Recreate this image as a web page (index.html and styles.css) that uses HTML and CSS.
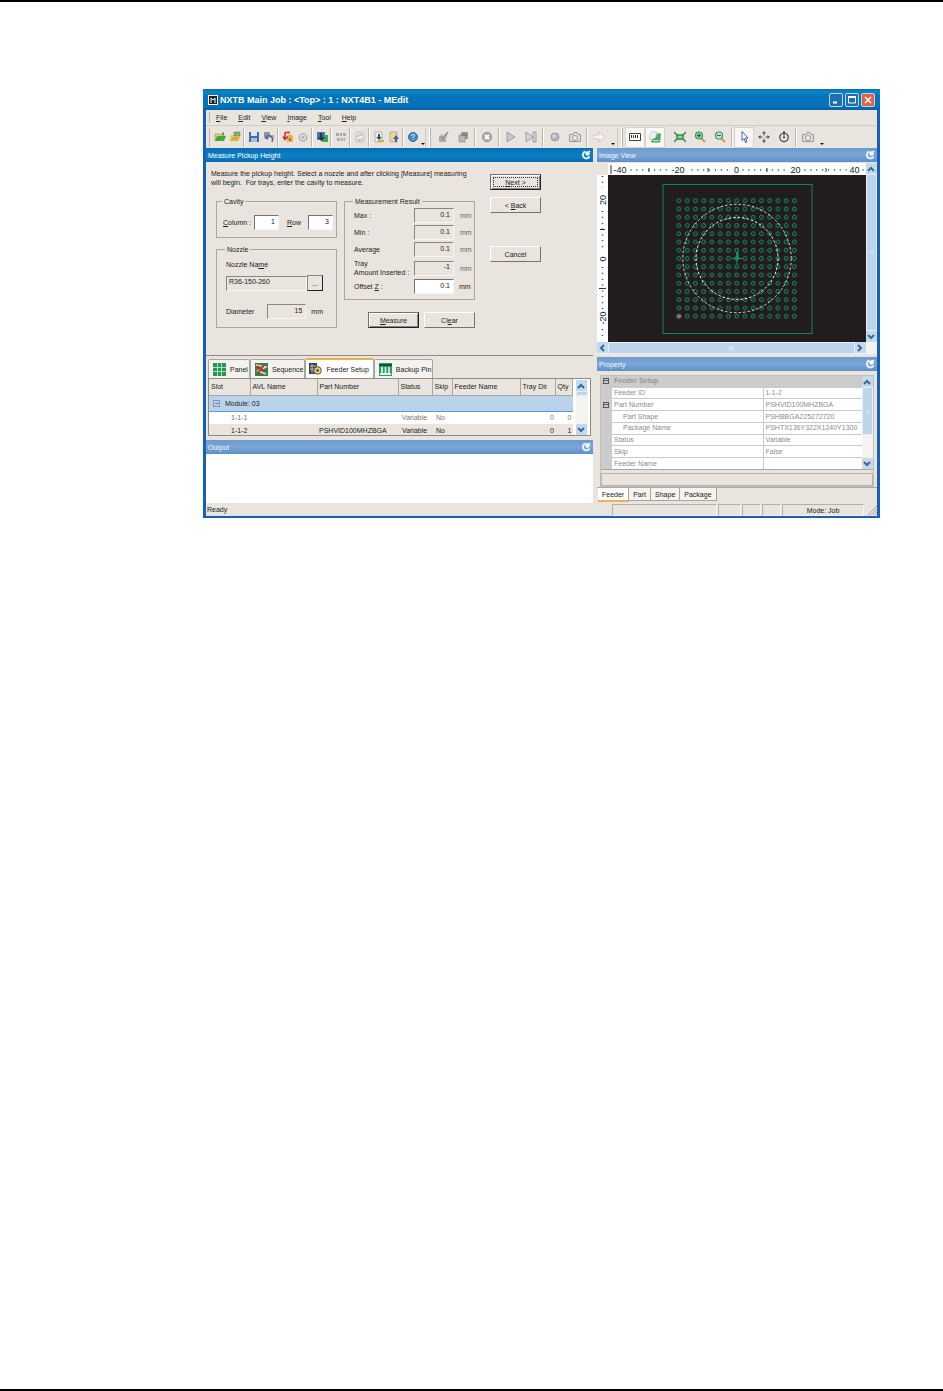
FILE: index.html
```html
<!DOCTYPE html>
<html lang="en">
<head>
<meta charset="utf-8">
<title>NXTB Main Job - MEdit</title>
<link rel="stylesheet" href="styles.css">
</head>
<body>
<main class="page">
<section class="window">
  <header class="titlebar">
    <svg class="app-icon" viewBox="0 0 10 10"><rect width="10" height="10" fill="#fff"/><rect x="1" y="1" width="8" height="8" fill="#222"/><path d="M3 8V3l2 2 2-2v5" fill="none" stroke="#fff"/></svg>
    <h1 class="title">NXTB Main Job : &lt;Top&gt; : 1 : NXT4B1 - MEdit</h1>
    <button class="winbtn" aria-label="Minimize"><svg viewBox="0 0 12 12"><path d="M3 8.500h4" stroke="#fff" stroke-width="2"/></svg></button>
    <button class="winbtn" aria-label="Maximize"><svg viewBox="0 0 12 12"><path d="M2.500 3v6h7V3z" fill="none" stroke="#fff"/><path d="M2 3h8" stroke="#fff" stroke-width="2"/></svg></button>
    <button class="winbtn close" aria-label="Close"><svg viewBox="0 0 12 12"><path d="M3 3l6 6M9 3l-6 6" stroke="#fff" stroke-width="1.500"/></svg></button>
  </header>
  <nav class="menu">
    <a href="#"><u>F</u>ile</a><a href="#"><u>E</u>dit</a><a href="#"><u>V</u>iew</a><a href="#"><u>I</u>mage</a><a href="#"><u>T</u>ool</a><a href="#"><u>H</u>elp</a>
  </nav>
  <div class="toolbar">
    <span class="grip first"></span>
    <button class="tool" aria-label="Open"><svg viewBox="0 0 12 12"><path d="M1 10V3h4l1 1h4v2" fill="#e8d36a" stroke="#8a8a3a" stroke-width=".6"/><path d="M1 10l2-5h9l-2 5z" fill="#49a63c"/><path d="M7 3l3-2v3" fill="#3c9a4a"/></svg></button>
    <button class="tool" aria-label="Open job"><svg viewBox="0 0 12 12"><path d="M1 10V4h4l1 1h4v2" fill="#e8d36a"/><path d="M1 10l2-4h8l-2 4z" fill="#d3b23c"/><path d="M5 1h6v4H5z" fill="#8fae6a" stroke="#666" stroke-width=".5"/></svg></button>
    <span class="sep"></span>
    <button class="tool" aria-label="Save"><svg viewBox="0 0 12 12"><path d="M1 1h10v10H1z" fill="#466bb3"/><path d="M3 1h6v4H3z" fill="#dbe6f6"/><path d="M3 7h6v4H3z" fill="#a9bddf"/></svg></button>
    <button class="tool" aria-label="Undo"><svg viewBox="0 0 12 12"><path d="M1 1h6v5H1z" fill="#8a93a6"/><path d="M5 4h6v3H5z" fill="#aaa"/><path d="M3 6c4-3 8 0 6 5" fill="none" stroke="#5c6c96" stroke-width="1.600"/><path d="M1 7l4-3v5z" fill="#5c6c96"/></svg></button>
    <span class="sep"></span>
    <button class="tool" aria-label="Revert"><svg viewBox="0 0 12 12"><path d="M5 5l3-2 3 2v6H5z" fill="#e5b64e"/><path d="M3 1.500h5" stroke="#c8322a" stroke-width="1.600"/><path d="M3 1.500v6M1 5.500l2 3 3-3" fill="none" stroke="#c8322a" stroke-width="1.500"/><path d="M7 7h2v3H7z" fill="#d8543a"/></svg></button>
    <button class="tool" aria-label="Stop"><svg viewBox="0 0 12 12"><circle cx="6" cy="6.500" r="3.700" fill="#e4e4e4" stroke="#aaa" stroke-width="1.300"/><path d="M4.500 5l3 3m0-3l-3 3" stroke="#999"/></svg></button>
    <span class="sep"></span>
    <button class="tool" aria-label="Transfer"><svg viewBox="0 0 12 12"><path d="M1 1h8v8H1z" fill="#4f76ad"/><path d="M8 4h4v7H6z" fill="#3ca64a"/><path d="M5 2v5" stroke="#1d3a55" stroke-width="2.500"/><path d="M2 6h7l-3.500 4.500z" fill="#1d3a55"/></svg></button>
    <span class="sep"></span>
    <button class="tool" aria-label="Optimize"><svg viewBox="0 0 12 12"><path d="M1 2h3v3H1zM5 2h2v3H5zM8 2h3v3H8zM2 7h8v3H2z" fill="#aaa"/><path d="M1 6h10M5 7v4M8 7v4" stroke="#ddd"/></svg></button>
    <span class="sep"></span>
    <button class="tool" aria-label="Refresh"><svg viewBox="0 0 12 12"><path d="M2 1h6l2 2v8H2z" fill="#eee" stroke="#aaa" stroke-width=".7"/><path d="M4 6a2 2 0 014-1M8 7a2 2 0 01-4 1" fill="none" stroke="#999"/></svg></button>
    <span class="sep"></span>
    <button class="tool" aria-label="Download"><svg viewBox="0 0 12 12"><path d="M2 1h7v10H2z" fill="#f7f2da" stroke="#999" stroke-width=".7"/><path d="M6 3v3" stroke="#274b9d" stroke-width="2"/><path d="M3 6h6L6 9z" fill="#274b9d"/><path d="M5 9h6v2H5z" fill="#d8a93c"/></svg></button>
    <button class="tool" aria-label="Upload"><svg viewBox="0 0 12 12"><path d="M2 1h7v10H2z" fill="#f2d688" stroke="#999" stroke-width=".7"/><path d="M8 7v4" stroke="#3e63ad" stroke-width="2"/><path d="M5 8h6L8 4z" fill="#3e63ad"/></svg></button>
    <span class="sep"></span>
    <button class="tool" aria-label="Help"><svg viewBox="0 0 12 12"><circle cx="6" cy="6" r="4.500" fill="#3d8ec5" stroke="#2a6e9f"/><path d="M4.500 5c0-2 3-2 3-.5C7.500 5.500 6 5.500 6 7M6 8v1" fill="none" stroke="#fff"/></svg></button>
    <span class="drop small"></span>
    <span class="grip"></span>
    <button class="tool wide" aria-label="Edit data"><svg viewBox="0 0 12 12"><path d="M2 5h7v6H2z" fill="#aaa"/><path d="M3 3h7v5H4z" fill="#c8c8c8"/><path d="M4 5l2 3 5-7" fill="none" stroke="#888" stroke-width="1.400"/></svg></button>
    <button class="tool wide" aria-label="Delete data"><svg viewBox="0 0 12 12"><path d="M4 1h7v7H4z" fill="#999"/><path d="M2 4h6v7H2z" fill="#b8b8b8" stroke="#888" stroke-width=".6"/><path d="M5 4h5" stroke="#666"/></svg></button>
    <span class="sep"></span>
    <button class="tool wide" aria-label="Abort"><svg viewBox="0 0 12 12"><circle cx="6" cy="6" r="4.700" fill="#a9abb0" stroke="#8c8e93" stroke-width=".8"/><path d="M4 4l4 4m0-4L4 8" stroke="#fff" stroke-width="1.800"/></svg></button>
    <span class="sep"></span>
    <button class="tool wide" aria-label="Run"><svg viewBox="0 0 12 12"><path d="M2 1l8 5-8 5z" fill="#c5c8d0" stroke="#8d9099" stroke-width=".8"/></svg></button>
    <button class="tool wide" aria-label="Step"><svg viewBox="0 0 12 12"><path d="M1 1l7 5-7 5zM8 1h3v10H8z" fill="#d0d2d8" stroke="#8d9099" stroke-width=".8"/></svg></button>
    <span class="sep"></span>
    <button class="tool wide" aria-label="Record"><svg viewBox="0 0 12 12"><circle cx="6" cy="6" r="4" fill="#b5b8c0" stroke="#8b8e95" stroke-width=".8"/><circle cx="5" cy="5" r="1.500" fill="#dcdde0"/></svg></button>
    <button class="tool wide" aria-label="Capture"><svg viewBox="0 0 12 12"><path d="M.5 3.500H4l1-2h3l1 2h2.500v7H.5z" fill="#ddd" stroke="#888" stroke-width=".8"/><circle cx="6" cy="7" r="2.500" fill="#eee" stroke="#888" stroke-width=".8"/></svg></button>
    <span class="sep"></span>
    <button class="tool wide" aria-label="Next item"><svg viewBox="0 0 12 12"><path d="M0 4h6V1l6 5-6 5V8H0z" fill="#f4f3f0" stroke="#c2bfb8" stroke-width=".7"/></svg></button>
    <span class="drop"></span>
    <span class="grip"></span>
    <button class="tool wide on" aria-label="Ruler"><svg viewBox="0 0 12 12"><path d="M.5 2.500h11v7H.5z" fill="#fff" stroke="#444"/><path d="M2.500 4v3M4.500 4v3M6.500 4v3M8.500 4v3" stroke="#333"/></svg></button>
    <button class="tool wide on" aria-label="Layers"><svg viewBox="0 0 12 12"><path d="M2 1h6l-2 7H0z" fill="#eee" stroke="#bbb" stroke-width=".6"/><path d="M2 11.500l1-3 4-2 1-4h4l-1 9z" fill="#48a763"/><path d="M4 9.500h6" stroke="#c8e8d0"/></svg></button>
    <span class="space"></span>
    <button class="tool wide" aria-label="Fit"><svg viewBox="0 0 12 12"><path d="M2 3h8v6H2z" fill="#48a763"/><path d="M0 1l3 3M12 1L9 4M0 11l3-3M12 11L9 8" stroke="#2b7e48" stroke-width="1.300"/><path d="M4 5h4v2H4z" fill="#9ad0ab"/></svg></button>
    <button class="tool wide" aria-label="Zoom in"><svg viewBox="0 0 12 12"><path d="M7 7l4 4" stroke="#cc9c3e" stroke-width="2"/><circle cx="5" cy="4.500" r="3.500" fill="#a9dcb8" stroke="#34935a" stroke-width="1.200"/><path d="M3 4.500h4m-2-2v4" stroke="#197540" stroke-width="1.300"/></svg></button>
    <button class="tool wide" aria-label="Zoom out"><svg viewBox="0 0 12 12"><path d="M7 7l4 4" stroke="#cc9c3e" stroke-width="2"/><circle cx="5" cy="4.500" r="3.500" fill="#d5e8ee" stroke="#34935a" stroke-width="1.200"/><path d="M3 4.500h4" stroke="#197540" stroke-width="1.300"/></svg></button>
    <span class="sep"></span>
    <button class="tool wide on" aria-label="Select"><svg viewBox="0 0 12 12"><path d="M4 .5v9l2-2 1.500 4 1.500-.7-1.500-3.800H10z" fill="#fff" stroke="#36508f" stroke-width=".9"/></svg></button>
    <button class="tool wide" aria-label="Move"><svg viewBox="0 0 12 12"><path d="M6 2v2.500M6 7.500V10M2 6h2.500M7.500 6H10" stroke="#555"/><path d="M6 0l2 2.500H4zM6 12l2-2.500H4zM0 6l2.500-2v4zM12 6L9.500 4v4z" fill="#555"/></svg></button>
    <button class="tool wide" aria-label="Rotate"><svg viewBox="0 0 12 12"><path d="M4 2.500a4.300 4.300 0 104 0" fill="none" stroke="#444" stroke-width="1.200"/><path d="M6 0v6" stroke="#444"/><path d="M4 3l2-3 2 3z" fill="#444"/><circle cx="6" cy="6.500" r="1" fill="#444"/></svg></button>
    <span class="sep"></span>
    <button class="tool wide" aria-label="Snapshot"><svg viewBox="0 0 12 12"><path d="M.5 3.500H4l1-2h3l1 2h2.500v7H.5z" fill="#ddd" stroke="#888" stroke-width=".8"/><circle cx="6" cy="7" r="2.500" fill="#eee" stroke="#888" stroke-width=".8"/></svg></button>
    <span class="drop"></span>
  </div>

  <div class="workspace">
    <div class="left">
      <h2 class="caption active">Measure Pickup Height<svg class="pin" viewBox="0 0 10 10"><path d="M4.500 1.500a3.500 3.500 0 104 5" fill="none" stroke="#e4f2fb" stroke-width="2"/><circle cx="6.500" cy="3.500" r="2.200" fill="#fff"/><path d="M6.500 3.500L9 1" stroke="#fff" stroke-width="1.500"/></svg></h2>
      <form class="form">
        <div class="form-main">
          <p class="intro">Measure the pickup height. Select a nozzle and after clicking [Measure] measuring<br>will begin.&nbsp; For trays, enter the cavity to measure.</p>
          <div class="groups">
            <div class="group-col">
              <fieldset class="group cavity">
                <legend>Cavity</legend>
                <label for="col"><u>C</u>olumn :</label><input class="field" id="col" value="1">
                <label class="row-label" for="row"><u>R</u>ow</label><input class="field" id="row" value="3">
              </fieldset>
              <fieldset class="group nozzle">
                <legend>Nozzle</legend>
                <label for="noz">Nozzle Na<u>m</u>e</label>
                <div class="line"><input class="field dim name" id="noz" value="R36-150-260" readonly><button class="push browse" type="button">...</button></div>
                <div class="line diameter"><label for="dia">Diameter</label><input class="field dim" id="dia" value="15" readonly><span>mm</span></div>
              </fieldset>
            </div>
            <div class="result-col">
              <fieldset class="group result">
                <legend>Measurement Result</legend>
                <label for="max">Max :</label><input class="field dim" id="max" value="0.1" readonly><span class="unit">mm</span>
                <label for="min">Min :</label><input class="field dim" id="min" value="0.1" readonly><span class="unit">mm</span>
                <label for="avg">Average</label><input class="field dim" id="avg" value="0.1" readonly><span class="unit">mm</span>
                <label for="tray">Tray<br>Amount Inserted :</label><input class="field dim" id="tray" value="-1" readonly><span class="unit">mm</span>
                <label for="off">Offset <u>Z</u> :</label><input class="field" id="off" value="0.1"><span class="unit dark">mm</span>
              </fieldset>
              <div class="line actions"><button class="push default" type="button"><u>M</u>easure</button><button class="push" type="button">Cl<u>e</u>ar</button></div>
            </div>
          </div>
        </div>
        <div class="wizard">
          <button class="push default focus" type="button"><u>N</u>ext &gt;</button>
          <button class="push" type="button">&lt; <u>B</u>ack</button>
          <button class="push cancel" type="button">Cancel</button>
        </div>
      </form>
      <div class="sheets">
        <button class="sheet"><svg viewBox="0 0 13 13"><rect width="13" height="13" fill="#279554"/><path d="M0 4.500h13M0 8.500h13M4.500 0v13M8.500 0v13" stroke="#a7e2bb"/></svg>Panel</button>
        <button class="sheet"><svg viewBox="0 0 13 13"><rect width="13" height="13" fill="#3b7b4c"/><path d="M1 2l10 2-8 4 8 3" fill="none" stroke="#f2dfd0" stroke-width="1.500"/><path d="M2 3l7 5M9 2l-6 8" stroke="#d22c22" stroke-width="2"/></svg>Sequence</button>
        <button class="sheet on"><svg viewBox="0 0 13 13"><path d="M0 0h8v11H0z" fill="#3d4450"/><path d="M1 3h6M1 6h6M3 1v9" stroke="#b8bdc6"/><circle cx="8.500" cy="7.500" r="3.800" fill="#e2c685" stroke="#6b5227"/><circle cx="8.500" cy="7.500" r="1.300" fill="#444"/></svg>Feeder Setup</button>
        <button class="sheet"><svg viewBox="0 0 13 13"><rect width="13" height="13" fill="#2f9a5f"/><path d="M0 2h13" stroke="#153" stroke-width="2"/><path d="M1 11h11" stroke="#dff" stroke-width="2"/><path d="M3 4v6M6.500 4v6M10 4v6" stroke="#e8f5ec" stroke-width="1.600"/></svg>Backup Pin</button>
      </div>
      <div class="listbox">
        <table class="slots">
          <colgroup><col class="c1"><col class="c2"><col class="c3"><col class="c4"><col class="c5"><col class="c6"><col class="c7"><col class="c8"></colgroup>
          <thead><tr><th>Slot</th><th>AVL Name</th><th>Part Number</th><th>Status</th><th>Skip</th><th>Feeder Name</th><th>Tray Dir</th><th>Qty</th></tr></thead>
          <tbody>
            <tr class="module"><td colspan="8"><span class="minus">−</span>Module: 03</td></tr>
            <tr class="faded"><td class="slot">1-1-1</td><td></td><td></td><td>Variable</td><td>No</td><td></td><td class="num">0</td><td class="num">0</td></tr>
            <tr class="current"><td class="slot">1-1-2</td><td></td><td class="part">PSHVID100MHZBGA</td><td>Variable</td><td>No</td><td></td><td class="num">0</td><td class="num">1</td></tr>
          </tbody>
        </table>
        <div class="vscroll"><button class="arrow" aria-label="Up"><svg viewBox="0 0 10 10"><path d="M2 7l3-3 3 3" fill="none" stroke="#3f6798" stroke-width="2"/></svg></button><span class="thumb short"></span><span class="track"></span><button class="arrow" aria-label="Down"><svg viewBox="0 0 10 10"><path d="M2 3l3 3 3-3" fill="none" stroke="#3f6798" stroke-width="2"/></svg></button></div>
      </div>
      <h2 class="caption output">Output<svg class="pin" viewBox="0 0 10 10"><path d="M4.500 1.500a3.500 3.500 0 104 5" fill="none" stroke="#e4f2fb" stroke-width="2"/><circle cx="6.500" cy="3.500" r="2.200" fill="#fff"/><path d="M6.500 3.500L9 1" stroke="#fff" stroke-width="1.500"/></svg></h2>
      <div class="output-body"></div>
    </div>

    <div class="right">
      <h2 class="caption">Image View<svg class="pin" viewBox="0 0 10 10"><path d="M4.500 1.500a3.500 3.500 0 104 5" fill="none" stroke="#e4f2fb" stroke-width="2"/><circle cx="6.500" cy="3.500" r="2.200" fill="#fff"/><path d="M6.500 3.500L9 1" stroke="#fff" stroke-width="1.500"/></svg></h2>
      <div class="viewer">
        <span class="corner"></span>
        <svg class="ruler" viewBox="0 0 257 12">
          <path d="M22 7h38M83 7h41M134 7h46M196 7h42M254 7h2" stroke="#333" stroke-width="1.500" stroke-dasharray="1 4.870"/>
          <path d="M2.500 2v9M40.500 5v4M99.500 5v4M158.500 5v4M217.500 5v4" stroke="#333"/>
          <text x="5" y="10">-40</text><text x="63" y="10">-20</text><text x="128" y="10" text-anchor="middle">0</text><text x="187" y="10" text-anchor="middle">20</text><text x="246" y="10" text-anchor="middle">40</text>
        </svg>
        <div class="vscroll"><button class="arrow" aria-label="Up"><svg viewBox="0 0 10 10"><path d="M2 7l3-3 3 3" fill="none" stroke="#3f6798" stroke-width="2"/></svg></button><span class="thumb">=</span><button class="arrow" aria-label="Down"><svg viewBox="0 0 10 10"><path d="M2 3l3 3 3-3" fill="none" stroke="#3f6798" stroke-width="2"/></svg></button></div>
        <svg class="ruler side" viewBox="0 0 11 167">
          <path d="M5.500 1v12M5.500 36v40M5.500 92v44M5.500 154v12" stroke="#333" stroke-width="1.500" stroke-dasharray="1 4.870"/>
          <path d="M3 54.500h5M2 113.500h7" stroke="#333"/>
          <text transform="translate(9 25) rotate(-90)" text-anchor="middle">20</text><text transform="translate(9 84) rotate(-90)" text-anchor="middle">0</text><text transform="translate(9 143) rotate(-90)" text-anchor="middle">-20</text>
        </svg>
        <svg class="canvas" viewBox="0 0 257 167">
          <defs><pattern id="hole" x="66.300" y="21.600" width="8.250" height="8.250" patternUnits="userSpaceOnUse"><circle cx="4.125" cy="4.125" r="1.900" fill="none" stroke="#14b878" stroke-width=".75"/></pattern></defs>
          <rect x="54.500" y="9.500" width="149" height="149" fill="none" stroke="#12835a"/>
          <rect x="66.300" y="21.600" width="123.750" height="123.750" fill="url(#hole)"/>
          <circle cx="128.500" cy="83.500" r="54.200" fill="none" stroke="#ddd" stroke-dasharray="2.500 2"/>
          <circle cx="128.500" cy="83.500" r="41" fill="none" stroke="#fff" stroke-dasharray="2.500 2"/>
          <path d="M123 83.500h11M128.500 77v12" stroke="#0da05f"/><path d="M129 77v6" stroke="#0da05f" stroke-width="2"/>
          <circle cx="70.500" cy="141.300" r="2.300" fill="#8a6a62"/>
        </svg>
        <div class="hscroll"><button class="arrow" aria-label="Left"><svg viewBox="0 0 10 10"><path d="M7 2L4 5l3 3" fill="none" stroke="#3f6798" stroke-width="2"/></svg></button><span class="thumb">III</span><button class="arrow" aria-label="Right"><svg viewBox="0 0 10 10"><path d="M3 2l3 3-3 3" fill="none" stroke="#3f6798" stroke-width="2"/></svg></button></div>
      </div>
      <h2 class="caption">Property<svg class="pin" viewBox="0 0 10 10"><path d="M4.500 1.500a3.500 3.500 0 104 5" fill="none" stroke="#e4f2fb" stroke-width="2"/><circle cx="6.500" cy="3.500" r="2.200" fill="#fff"/><path d="M6.500 3.500L9 1" stroke="#fff" stroke-width="1.500"/></svg></h2>
      <div class="property">
        <div class="propbox">
          <table class="props">
            <tr class="head"><td class="gut"><span class="box"></span></td><th colspan="2">Feeder Setup</th></tr>
            <tr><td class="gut"></td><td>Feeder ID</td><td class="val">1-1-2</td></tr>
            <tr><td class="gut"><span class="box"></span></td><td>Part Number</td><td class="val">PSHVID100MHZBGA</td></tr>
            <tr><td class="gut"></td><td class="sub">Part Shape</td><td class="val">PSHBBGA225272720</td></tr>
            <tr><td class="gut"></td><td class="sub">Package Name</td><td class="val">PSHTX136Y322X1240Y1300</td></tr>
            <tr><td class="gut"></td><td>Status</td><td class="val">Variable</td></tr>
            <tr><td class="gut"></td><td>Skip</td><td class="val">False</td></tr>
            <tr><td class="gut"></td><td>Feeder Name</td><td class="val"></td></tr>
          </table>
          <div class="vscroll"><button class="arrow" aria-label="Up"><svg viewBox="0 0 10 10"><path d="M2 7l3-3 3 3" fill="none" stroke="#3f6798" stroke-width="2"/></svg></button><span class="thumb mid">=</span><span class="track"></span><button class="arrow" aria-label="Down"><svg viewBox="0 0 10 10"><path d="M2 3l3 3 3-3" fill="none" stroke="#3f6798" stroke-width="2"/></svg></button></div>
        </div>
        <div class="hint"></div>
      </div>
      <div class="tabs"><button class="tab on">Feeder</button><button class="tab">Part</button><button class="tab">Shape</button><button class="tab">Package</button></div>
    </div>
  </div>
  <footer class="status"><span class="ready">Ready</span><span class="cell s1"></span><span class="cell s2"></span><span class="cell s3"></span><span class="cell s3"></span><span class="cell mode">Mode: Job</span><svg class="size" viewBox="0 0 10 10"><path d="M1 10l9-9M4 10l6-6M7 10l3-3" stroke="#aaa59a"/></svg></footer>
</section>
</main>
</body>
</html>
```
FILE: styles.css
```css
* { box-sizing: border-box; }
body { margin: 0; background: #fff; }
.page {
  min-height: 100vh;
  padding: 87px 63px 0 203px;
  border-top: 2px solid #000;
  border-bottom: 2px solid #000;
  font: 7px/9px "Liberation Sans", Arial, sans-serif;
  color: #222;
}
button, input { font: inherit; color: inherit; margin: 0; }
button { padding: 0; border: 0; background: none; }
.window { border: solid #1560b8; border-width: 0 3px 2px; background: #e9e5de; }

.titlebar {
  display: flex; align-items: center; gap: 2px; height: 21px;
  margin: 0 -3px; padding: 0 5px;
  background: linear-gradient(#0a6fb8, #0785c8 15%, #0671b8 40%, #0674bc 80%, #0560a4);
}
.app-icon { width: 10px; height: 10px; }
.title { flex: 1; margin: 0; font-size: 9px; line-height: 12px; color: #fff; }
.winbtn { width: 14px; height: 14px; border: 1px solid #b9d7ee; border-radius: 2px; background: #1d6fb4; }
.winbtn svg { display: block; width: 12px; height: 12px; }
.winbtn.close { background: #dd6546; }

.menu { display: flex; gap: 11px; height: 15px; padding: 0 11px 0 10px; align-items: center; }
.menu::before { content: ""; width: 1px; height: 11px; margin: 0 -5px 0 -7px; background: #b9b4a9; }
.menu a { color: inherit; text-decoration: none; }

.toolbar { display: flex; align-items: center; height: 23px; border-top: 1px solid #d2cdc3; }
.tool { display: flex; align-items: center; justify-content: center; flex: none; width: 15px; height: 21px; }
.tool svg { flex: none; width: 12px; height: 12px; }
.tool.wide { width: 20px; }
.tool.on { background: #f8f7f4; border: 1px solid #d8d4cb; }
.sep, .grip { flex: none; width: 4px; height: 19px; background: linear-gradient(90deg, transparent 1px, #bbb6ab 1px 2px, #fff 2px 3px, transparent 3px); }
.grip { width: 8px; background: linear-gradient(90deg, #d2cdc3 1px, transparent 1px 4px, #fff 4px 5px, #bbb6ab 5px 6px, transparent 6px); }
.grip.first { width: 6px; background: linear-gradient(90deg, transparent 3px, #bbb6ab 3px 4px, transparent 4px); }
.space { width: 5px; }
.drop { width: 8px; height: 21px; display: flex; align-items: flex-end; justify-content: center; padding-bottom: 3px; }
.drop.small { width: 5px; }
.drop::after { content: ""; border: 2px solid transparent; border-top-color: #111; border-bottom: 0; }

.workspace { display: grid; grid-template-columns: 1fr 280px; gap: 4px; }
.left, .right { min-width: 0; display: flex; flex-direction: column; }
.caption {
  display: flex; align-items: center; justify-content: space-between;
  height: 14px; margin: 0; padding: 0 2px; flex: none;
  font-size: 7px; font-weight: 400; color: #eef5fc;
  background: linear-gradient(#6c9bd0, #7ba6d6 50%, #5f8fc8);
}
.caption.active { background: linear-gradient(#0a6cb4, #0a80c4 50%, #066eb4); color: #fff; }
.pin { width: 10px; height: 10px; }

.form { display: flex; gap: 15px; padding: 7px 5px 0; height: 194px; border-bottom: 1px solid #8f8b84; }
.form-main { width: 264px; }
.intro { margin: 0; white-space: nowrap; }
.groups { display: flex; gap: 7px; margin: 10px 0 0 5px; }
.group-col { width: 121px; display: flex; flex-direction: column; gap: 7px; }
.result-col { width: 131px; }
.group { min-width: 0; margin: 0; border: 1px solid #aca79d; }
.group legend { padding: 0 2px; margin-left: -1px; }
.field {
  height: 15px; min-width: 0; padding: 0 3px 3px 2px; text-align: right; background: #fff;
  border: 1px solid; border-color: #77736c #f8f6f2 #f8f6f2 #77736c; border-radius: 0;
}
.field.dim { background: #e9e5de; border-color: #8b867d #f8f6f2 #f8f6f2 #8b867d; }
.cavity { display: flex; align-items: center; padding: 9px 3px 7px 6px; }
.cavity .field { width: 25px; }
.cavity label { width: 31px; }
.cavity .row-label { width: 21px; margin-left: 8px; }
.nozzle { padding: 6px 13px 8px 9px; }
.line { display: flex; align-items: center; }
.nozzle .line { margin-top: 6px; }
.nozzle .name { flex: 1; text-align: left; }
.nozzle .diameter { margin-top: 13px; }
.diameter label { width: 41px; }
.diameter .field { width: 40px; margin-right: 5px; }
.push {
  width: 51px; height: 16px; border: 1px solid; border-color: #fff #77736c #77736c #fff;
  background: #e9e5de; text-align: center;
}
.push.browse { width: 16px; border-color: #8b867d #222 #222 #8b867d; }
.push.default { border-color: #77736c #222 #222 #77736c; box-shadow: inset 1px 1px #fff, inset -1px -1px #8b867d; }
.push.focus { outline: 1px dotted #333; outline-offset: -4px; }
.result { display: grid; grid-template-columns: 60px 40px 1fr; row-gap: 2px; align-items: center; padding: 2px 0 5px 9px; }
.result label { white-space: nowrap; }
.unit { padding-left: 6px; color: #666; }
.unit.dark { padding-left: 5px; color: #222; }
.actions { gap: 5px; margin-top: 12px; justify-content: flex-end; }
.wizard { display: flex; flex-direction: column; gap: 7px; padding-top: 5px; }
.wizard .cancel { margin-top: 26px; }

.sheets { display: flex; padding: 2px 2px 0; height: 22px; align-items: flex-end; }
.sheet {
  display: flex; align-items: center; justify-content: center; gap: 4px; height: 19px; padding: 0 1px 0 4px; white-space: nowrap;
  background: #f4f2ee; border: 1px solid #a9a59c; border-bottom: 0; border-radius: 2px 2px 0 0;
}
.sheet svg { width: 13px; height: 13px; }
.sheet.on { height: 20px; padding: 0 4px 0 3px; background: #fff; border-top: 2px solid #e8b250; }
.listbox { display: flex; height: 58px; margin: 0 2px 4px; border: 1px solid #8f8b84; background: #fff; overflow: hidden; }
.slots { flex: 1; table-layout: fixed; border-collapse: collapse; }
.c1 { width: 41px; } .c2 { width: 67px; } .c3 { width: 81px; } .c4 { width: 34px; }
.c5 { width: 20px; } .c6 { width: 68px; } .c7 { width: 35px; }
.slots th { height: 16px; padding: 0 0 0 2px; font-weight: 400; text-align: left; background: #e9e5de; border-right: 1px solid #aca79d; border-bottom: 1px solid #aca79d; white-space: nowrap; }
.slots td { height: 13px; padding: 0 0 0 4px; white-space: nowrap; }
.slots .module td { height: 16px; padding-left: 4px; background: #b9d4ea; border-bottom: 1px solid #5d9bd0; }
.minus { display: inline-block; width: 7px; height: 7px; margin-right: 5px; border: 1px solid #7696b5; line-height: 5px; text-align: center; }
.slots .faded { color: #777; }
.slots .current { background: #e9e5de; }
.slots .slot { padding-left: 22px; }
.slots .part { padding-left: 2px; }
.slots .num { padding: 0 1px 0 0; text-align: right; }

.vscroll { display: flex; flex-direction: column; width: 11px; background: #f3f3ef; }
.listbox .vscroll { width: 12px; margin: 1px 2px 0 3px; }
.arrow { flex: none; width: 11px; height: 11px; background: #c2d9ee; }
.arrow svg { display: block; width: 10px; height: 10px; }
.track { flex: 1; }
.thumb { flex: 1; display: flex; align-items: center; justify-content: center; background: #bdd4ea; border: 1px solid #e6f0f8; color: #eef5fb; }
.thumb.short { flex: none; height: 5px; }
.thumb.mid { flex: none; height: 48px; }

.output-body { flex: 1; min-height: 49px; background: #fff; }
.viewer {
  display: grid; grid-template-columns: 11px 1fr 11px; grid-template-rows: 12px 167px 12px;
  margin: 1px 0 3px; background: #fff;
}
.viewer .vscroll { grid-column: 3; grid-row: 1 / 3; }
.corner { background: #e9e5de; }
.ruler { display: block; width: 100%; height: 12px; font-size: 9px; fill: #222; }
.ruler.side { height: 167px; }
.canvas { display: block; width: 100%; height: 167px; background: #211d1f; }
.hscroll { grid-column: 1 / 4; display: flex; padding-right: 11px; background: #f3f3ef; }
.property { margin: 4px 3px 0; border: 1px solid #c5c0b6; }
.propbox { display: flex; height: 94px; background: #fff; border-bottom: 1px solid #aca79d; overflow: hidden; }
.props { flex: 1; height: 94px; table-layout: fixed; border-collapse: collapse; color: #8c8c8c; }
.props td, .props th { padding: 0 0 0 2px; line-height: 8px; text-align: left; border-bottom: 1px solid #c9c9c9; white-space: nowrap; }
.props .val { border-left: 1px solid #c9c9c9; }
.props .gut { width: 11px; background: #ccc; border-bottom-color: #ccc; }
.props td:last-child { width: 99px; }
.props th { background: #ccc; color: #999; }
.props .sub { padding-left: 11px; }
.box { display: block; width: 6px; height: 6px; border: 1px solid #555; background: linear-gradient(transparent 1px, #555 1px 2px, transparent 2px); }
.hint { height: 13px; margin: 3px 0 0; border: 1px solid #b9b4a9; }
.tabs { display: flex; height: 15px; padding: 0 1px; border-top: 1px solid #aca79d; }
.tab { height: 13px; padding: 0 4px; background: #f6f4f0; border: 1px solid #a9a59c; border-top: 0; border-left: 0; }
.tab.on { height: 14px; background: #fff; border-bottom: 2px solid #e8b250; }

.status { display: flex; align-items: center; gap: 1px; height: 13px; padding-left: 1px; }
.ready { flex: 1; }
.cell { height: 12px; border: 1px solid; border-color: #b5b0a5 #f8f6f2 #f8f6f2 #b5b0a5; text-align: center; line-height: 11px; }
.s1 { width: 105px; } .s2 { width: 23px; } .s3 { width: 19px; }
.mode { width: 82px; }
.size { width: 10px; height: 10px; margin-left: 2px; }
```
